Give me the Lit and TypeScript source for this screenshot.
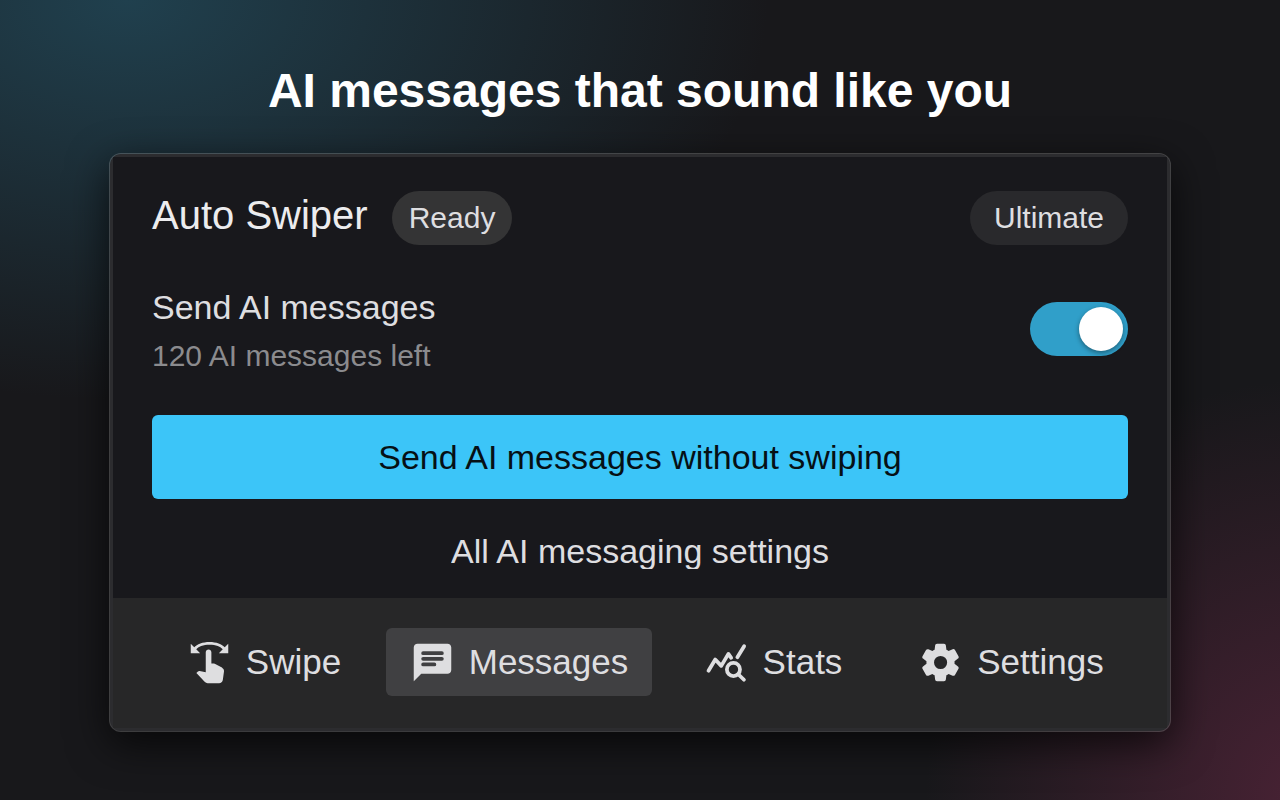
import { LitElement, html, css, svg } from "lit";
import { customElement, state } from "lit/decorators.js";

const icons = {
  swipe: svg`<path d="M18.89 14.75l-4.09-2.04c-.28-.14-.58-.21-.89-.21H13v-6C13 5.67 12.33 5 11.5 5S10 5.67 10 6.5v10.74l-3.25-.74c-.33-.07-.68.03-.92.28l-.83.84 4.54 4.79c.38.38.89.59 1.42.59h6.16c1 0 1.84-.73 1.98-1.72l.63-4.47c.12-.85-.32-1.68-1.1-2.06zM20.13 3.87C18.69 2.17 15.6 1 12 1S5.31 2.17 3.87 3.87L2 2v5h5L4.93 4.93C5.93 3.64 8.63 2.5 12 2.5s6.07 1.14 7.07 2.43L17 7h5V2z"/>`,
  messages: svg`<path fill-rule="evenodd" d="M20 2H4c-1.1 0-2 .9-2 2v18l4-4h14c1.1 0 2-.9 2-2V4c0-1.1-.9-2-2-2zM7 6h10a1 1 0 0 1 0 2H7a1 1 0 0 1 0-2zm0 3h10a1 1 0 0 1 0 2H7a1 1 0 0 1 0-2zm0 3h6a1 1 0 0 1 0 2H7a1 1 0 0 1 0-2z"/>`,
  stats: svg`<g fill="none" stroke="currentColor" stroke-width="2" stroke-linecap="round" stroke-linejoin="round"><path d="M2.4 16.4l3.6-6 3.2 3.4L13 7.4l1.5 2.1M17.8 9.2l3.6-5.9M18.4 18.4l2.9 2.8"/><circle cx="15.7" cy="15.7" r="3.5"/></g>`,
  settings: svg`<path fill-rule="evenodd" d="M19.5 12c0-.23-.01-.45-.03-.68l1.86-1.41c.4-.3.51-.86.26-1.3l-1.87-3.23a.99.99 0 0 0-1.25-.42l-2.15.91c-.37-.26-.76-.49-1.17-.68l-.29-2.31c-.06-.5-.49-.88-.99-.88h-3.73c-.51 0-.94.38-1 .88l-.29 2.31c-.41.19-.8.42-1.17.68l-2.15-.91c-.46-.2-1-.02-1.25.42L2.41 8.62c-.25.44-.14.99.26 1.3l1.86 1.41a7.3 7.3 0 0 0 0 1.35l-1.86 1.41c-.4.3-.51.86-.26 1.3l1.87 3.23c.25.44.79.62 1.25.42l2.15-.91c.37.26.76.49 1.17.68l.29 2.31c.06.5.49.88.99.88h3.73c.5 0 .93-.38.99-.88l.29-2.31c.41-.19.8-.42 1.17-.68l2.15.91c.46.2 1 .02 1.25-.42l1.87-3.23c.25-.44.14-.99-.26-1.3l-1.86-1.41c.03-.23.04-.45.04-.68zm-7.46 3.5a3.5 3.5 0 1 1 0-7 3.5 3.5 0 0 1 0 7z"/>`,
};

const tabs = [
  { id: "swipe", label: "Swipe", icon: icons.swipe },
  { id: "messages", label: "Messages", icon: icons.messages },
  { id: "stats", label: "Stats", icon: icons.stats },
  { id: "settings", label: "Settings", icon: icons.settings },
];

@customElement("app-root")
export class AppRoot extends LitElement {
  @state() private tab = "messages";
  @state() private sending = true;

  static styles = css`
    :host {
      display: flex;
      flex-direction: column;
      align-items: center;
      box-sizing: border-box;
      min-height: 100vh;
      padding: 63px 109px 68px;
      font-family: "Liberation Sans", Arial, sans-serif;
      color: #dedee0;
      background:
        radial-gradient(ellipse 640px 400px at 10% 0%, #20404e, #20404e00),
        radial-gradient(ellipse 380px 420px at 102% 100%, #482234, #48223400),
        #18181b;
    }
    * { box-sizing: border-box; }
    button { font: inherit; color: inherit; border: 0; cursor: pointer; }
    h1 {
      margin: 0 0 34px;
      font-size: 48px;
      line-height: 56px;
      font-weight: 700;
      color: #fff;
      text-align: center;
    }
    .card {
      width: 100%;
      max-width: 1062px;
      border: 1px solid #ffffff33;
      border-radius: 12px;
      background: #2c2c2f;
      background-clip: padding-box;
      padding: 3px;
      overflow: hidden;
      box-shadow: 0 12px 40px #000000b3;
    }
    .body {
      display: flex;
      flex-direction: column;
      background: #18181c;
      padding: 34px 39px 29px;
    }
    header { display: flex; align-items: center; }
    h2 {
      margin: 0 24px 0 0;
      font-size: 40px;
      line-height: 46px;
      padding-bottom: 6px;
      font-weight: 400;
      color: #ececee;
    }
    .pill {
      display: flex;
      align-items: center;
      height: 54px;
      border-radius: 27px;
      font-size: 30px;
      background: #343435;
      padding: 0 17px;
    }
    .plan { margin-left: auto; background: #29292c; padding: 0 24px; }
    .row {
      display: flex;
      align-items: center;
      justify-content: space-between;
      margin-top: 39px;
    }
    .row label { display: block; font-size: 34px; line-height: 46px; }
    .left { margin: 8px 0 0; font-size: 30px; line-height: 36px; color: #8b8b8e; }
    .switch {
      appearance: none;
      width: 98px;
      height: 54px;
      margin: 0;
      padding: 5px;
      border-radius: 27px;
      background: #55555a;
      display: flex;
      cursor: pointer;
    }
    .switch::before {
      content: "";
      width: 44px;
      height: 44px;
      border-radius: 50%;
      background: #fff;
      box-shadow: 0 2px 5px #00000066;
    }
    .switch:checked { background: #309fc9; justify-content: flex-end; }
    .primary {
      height: 84px;
      margin-top: 41px;
      border-radius: 6px;
      background: #3cc5f8;
      color: #061015;
      font-size: 34px;
    }
    .all {
      align-self: center;
      margin-top: 32px;
      height: 38px;
      overflow: hidden;
      font-size: 34px;
      line-height: 40px;
      color: inherit;
      text-decoration: none;
    }
    nav {
      display: grid;
      grid-template-columns: 244fr 266fr 242fr 234fr;
      background: #272728;
      padding: 30px 39px 32px 29px;
    }
    .tab {
      display: flex;
      align-items: center;
      justify-content: center;
      gap: 14px;
      height: 68px;
      padding: 0;
      border-radius: 6px;
      background: none;
      font-size: 35px;
    }
    .tab.active { background: #404042; }
    .tab svg { width: 45px; height: 45px; fill: currentColor; }
  `;

  render() {
    return html`
      <h1>AI messages that sound like you</h1>
      <main class="card">
        <section class="body">
          <header>
            <h2>Auto Swiper</h2>
            <span class="pill">Ready</span>
            <span class="pill plan">Ultimate</span>
          </header>
          <div class="row">
            <div>
              <label for="send">Send AI messages</label>
              <p class="left">120 AI messages left</p>
            </div>
            <input
              id="send"
              class="switch"
              type="checkbox"
              role="switch"
              .checked=${this.sending}
              @change=${(e: Event) => (this.sending = (e.target as HTMLInputElement).checked)}
            />
          </div>
          <button class="primary">Send AI messages without swiping</button>
          <a class="all" href="#settings">All AI messaging settings</a>
        </section>
        <nav>
          ${tabs.map(
            (t) => html`<button
              class="tab ${t.id === this.tab ? "active" : ""}"
              @click=${() => (this.tab = t.id)}
            >
              <svg viewBox="0 0 24 24" aria-hidden="true">${t.icon}</svg>
              <span>${t.label}</span>
            </button>`
          )}
        </nav>
      </main>
    `;
  }
}
